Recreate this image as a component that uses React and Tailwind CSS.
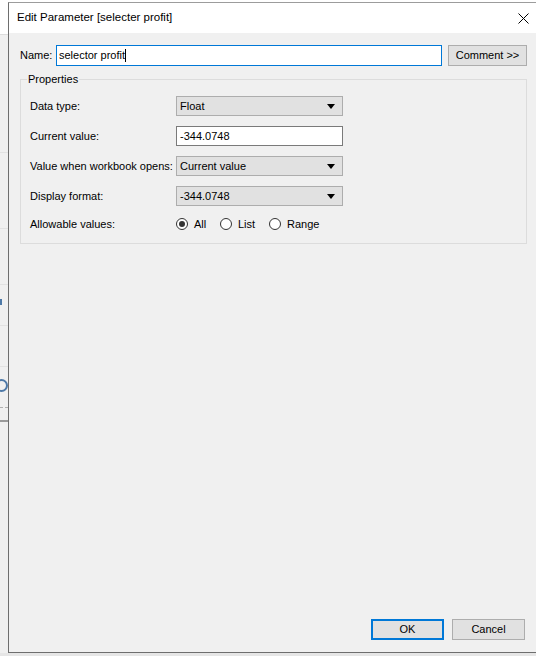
import React from "react";

const Select = ({ value }) => (
  <div className="flex items-center justify-between w-[167px] h-[20px] bg-[#e1e1e1] border border-[#adadad] pl-[3px] pr-[7px]">
    <span>{value}</span>
    <svg width="8" height="5" viewBox="0 0 8 5">
      <path d="M0 0H8L4 5Z" fill="#000" />
    </svg>
  </div>
);

const Radio = ({ label, checked, width }) => (
  <div className="flex items-center gap-[6px]" style={{ width }}>
    <span className="flex items-center justify-center w-[12px] h-[12px] rounded-full border border-[#333] bg-white">
      {checked && <span className="w-[6px] h-[6px] rounded-full bg-[#333]" />}
    </span>
    <span>{label}</span>
  </div>
);

const App = () => {
  return (
    <div className="w-[536px] h-[656px] overflow-hidden bg-[#f0f0f0] text-[11px] text-black flex flex-col font-['Liberation_Sans',Arial,sans-serif]">
      <div className="flex h-[653px]">
        {/* background app strip */}
        <div className="w-[8px] shrink-0 flex flex-col bg-[#f0f0f0] overflow-hidden">
          <div className="h-[35px] shrink-0 bg-white border-b border-[#dddddd]" />
          <div className="h-[118px] shrink-0 border-b border-[#e2e2e2]" />
          <div className="h-[76px] shrink-0 border-b border-[#e2e2e2]" />
          <div className="h-[56px] shrink-0 border-b border-[#e2e2e2]" />
          <div className="h-[41px] shrink-0 border-b border-[#e2e2e2] relative">
            <span className="absolute left-0 top-[14px] w-[2px] h-[6px] bg-[#4e79a7]" />
          </div>
          <div className="h-[41px] shrink-0 border-b border-[#e2e2e2]" />
          <div className="h-[41px] shrink-0 border-b border-dashed border-[#b0b0b0] relative">
            <span className="absolute left-[-5px] top-[12px] w-[13px] h-[13px] rounded-full border-2 border-[#4e79a7]" />
          </div>
          <div className="h-[14px] shrink-0 border-b-2 border-[#9a9a9a]" />
          <div className="flex-1" />
        </div>

        {/* dialog */}
        <div className="flex flex-col">
          <div className="h-[2px] bg-white" />
          <div className="w-[540px] h-[651px] flex flex-col bg-[#f0f0f0] border-t border-t-[#9c9c9c] border-l border-l-[#6e6e6e] border-b border-b-[#6e6e6e]">
            {/* title bar */}
            <div className="h-[30px] bg-white flex items-center justify-between pl-[8px] pr-[19px] text-[11.5px]">
              <span>Edit Parameter [selecter profit]</span>
              <svg width="11" height="11" viewBox="0 0 11 11">
                <path d="M0.5 0.5L10.5 10.5M10.5 0.5L0.5 10.5" stroke="#000" strokeWidth="1" />
              </svg>
            </div>

            <div className="flex-1 flex flex-col pl-[11px] pt-[12px]">
              <div className="w-[507px]">
                {/* name row */}
                <div className="flex items-center">
                  <span className="w-[36px]">Name:</span>
                  <div className="w-[386px] h-[21px] bg-white border border-[#0078d7] flex items-center pl-[2px]">
                    <span>selector profit</span>
                    <span className="w-px h-[13px] bg-black" />
                  </div>
                  <div className="ml-[6px] w-[79px] h-[21px] bg-[#e1e1e1] border border-[#adadad] flex items-center justify-center">
                    Comment &gt;&gt;
                  </div>
                </div>

                {/* properties group */}
                <fieldset className="mt-[7px] border border-[#dcdcdc] pl-[9px] pt-[10px] pb-[10px]">
                  <legend className="ml-[-3px] px-[1px] leading-[13px]">Properties</legend>
                  <div className="grid grid-cols-[146px_167px] gap-y-[10px] items-center">
                    <span>Data type:</span>
                    <Select value="Float" />
                    <span>Current value:</span>
                    <div className="w-[167px] h-[20px] bg-white border border-[#7a7a7a] flex items-center pl-[3px]">
                      -344.0748
                    </div>
                    <span>Value when workbook opens:</span>
                    <Select value="Current value" />
                    <span>Display format:</span>
                    <Select value="-344.0748" />
                    <span>Allowable values:</span>
                    <div className="flex items-center h-[16px]">
                      <Radio label="All" checked width={44} />
                      <Radio label="List" width={49} />
                      <Radio label="Range" width={60} />
                    </div>
                  </div>
                </fieldset>
              </div>

              <div className="flex-1" />

              {/* buttons */}
              <div className="w-[507px] flex justify-end gap-[8px] pr-[2px] pb-[12px]">
                <div className="w-[73px] h-[21px] bg-[#e1e1e1] border-2 border-[#0078d7] flex items-center justify-center">
                  OK
                </div>
                <div className="w-[73px] h-[21px] bg-[#e1e1e1] border border-[#adadad] flex items-center justify-center">
                  Cancel
                </div>
              </div>
            </div>
          </div>
        </div>
      </div>
      <div className="flex-1 bg-[#e6e6e6]" />
    </div>
  );
};

export default App;
